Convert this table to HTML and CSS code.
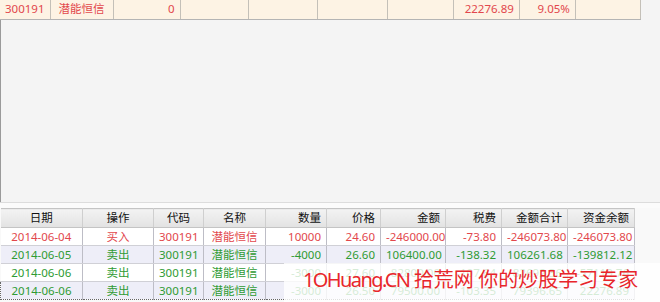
FILE: index.html
```html
<!DOCTYPE html>
<html lang="zh-CN">
<head>
<meta charset="utf-8">
<link rel="stylesheet" href="styles.css">
</head>
<body>
<div class="top-panel">
  <table class="pos">
    <colgroup>
      <col class="w50"><col class="w63"><col class="w67"><col class="w68"><col class="w69"><col class="w70"><col class="w66"><col class="w66"><col class="w56"><col class="w65">
    </colgroup>
    <tr>
      <td class="c">300191</td>
      <td class="c">潜能恒信</td>
      <td class="r">0</td>
      <td></td><td></td><td></td><td></td>
      <td class="r">22276.89</td>
      <td class="r">9.05%</td>
      <td></td>
    </tr>
  </table>
</div>
<div class="divider"></div>
<div class="bottom-panel">
  <table class="trades">
    <colgroup>
      <col class="d1"><col class="d2"><col class="d3"><col class="d4"><col class="d5"><col class="d6"><col class="d7"><col class="d8"><col class="d9"><col class="d10">
    </colgroup>
    <thead>
      <tr>
        <th class="c">日期</th><th class="c">操作</th><th class="c">代码</th><th class="c">名称</th>
        <th class="r">数量</th><th class="r">价格</th><th class="r">金额</th><th class="r">税费</th><th class="r">金额合计</th><th class="r">资金余额</th>
      </tr>
    </thead>
    <tbody>
      <tr class="buy">
        <td class="c">2014-06-04</td><td class="c">买入</td><td class="c">300191</td><td class="c">潜能恒信</td>
        <td class="r">10000</td><td class="r">24.60</td><td class="r">-246000.00</td><td class="r">-73.80</td><td class="r">-246073.80</td><td class="r">-246073.80</td>
      </tr>
      <tr class="sell alt">
        <td class="c">2014-06-05</td><td class="c">卖出</td><td class="c">300191</td><td class="c">潜能恒信</td>
        <td class="r">-4000</td><td class="r">26.60</td><td class="r">106400.00</td><td class="r">-138.32</td><td class="r">106261.68</td><td class="r">-139812.12</td>
      </tr>
      <tr class="sell">
        <td class="c">2014-06-06</td><td class="c">卖出</td><td class="c">300191</td><td class="c">潜能恒信</td>
        <td class="r">-3000</td><td class="r">27.60</td><td class="r">82800.00</td><td class="r">-107.64</td><td class="r">82692.36</td><td class="r">-57119.76</td>
      </tr>
      <tr class="sell alt focus">
        <td class="c">2014-06-06</td><td class="c">卖出</td><td class="c">300191</td><td class="c">潜能恒信</td>
        <td class="r">-3000</td><td class="r">26.50</td><td class="r">79500.00</td><td class="r">-103.35</td><td class="r">79396.65</td><td class="r">22276.89</td>
      </tr>
    </tbody>
  </table>
  <div class="watermark"><span class="wm-latin">1OHuang.CN</span> 拾荒网 你的炒股学习专家</div>
</div>
</body>
</html>
```
FILE: styles.css
```css
html, body {
  margin: 0;
  padding: 0;
  width: 660px;
  height: 302px;
  overflow: hidden;
  background: #f7f7f7;
  font-family: "Noto Sans", "Noto Sans CJK SC", sans-serif;
  font-size: 11.5px;
}

table {
  border-collapse: collapse;
  table-layout: fixed;
}

td, th {
  padding: 0 5px;
  white-space: nowrap;
  overflow: hidden;
  line-height: 16px;
}

.c { text-align: center; }
.r { text-align: right; }

/* top panel */
.top-panel {
  height: 202px;
  background: #f4f4f4;
  border-left: 1px solid #9a9a9a;
  box-sizing: border-box;
}

.pos {
  width: 641px;
  margin-left: -1px;
  background: #fdf3e4;
  color: #e2474c;
}
.pos td {
  height: 18px;
  border-right: 1px solid #c4c0b8;
  border-bottom: 1px solid #b4b4b4;
  padding-top: 0;
  padding-bottom: 1px;
}

.w50 { width: 50px; }
.w63 { width: 63px; }
.w67 { width: 67px; }
.w68 { width: 68px; }
.w69 { width: 69px; }
.w70 { width: 70px; }
.w66 { width: 66px; }
.w56 { width: 56px; }
.w65 { width: 65px; }

.divider {
  height: 5px;
  background: #fbfbfb;
  border-top: 1px solid #dcdcdc;
}

/* bottom panel */
.bottom-panel {
  position: relative;
  height: 94px;
  background: #f9f9f9;
}

.trades {
  width: 634px;
}

.d1 { width: 82px; }
.d2 { width: 71px; }
.d3 { width: 50px; }
.d4 { width: 62px; }
.d5 { width: 61px; }
.d6 { width: 54px; }
.d7 { width: 65px; }
.d8 { width: 56px; }
.d9 { width: 66px; }
.d10 { width: 67px; }

.trades th {
  font-weight: normal;
  color: #111111;
  height: 18px;
  background: linear-gradient(#f3f3f3, #e2e2e2);
  border-top: 1px solid #c4c4c4;
  border-right: 1px solid #cfcfcf;
  border-bottom: 1px solid #c4c4c4;
  padding-top: 0;
  padding-bottom: 0;
}

.trades td {
  height: 17px;
  background: #ffffff;
  border-right: 1px solid #bdbdc6;
  border-bottom: 1px solid #d0d0d6;
  padding-top: 0;
  padding-bottom: 0;
}

.trades tr.alt td {
  background: #eeeef8;
}

.buy td { color: #e2474c; }
.sell td { color: #2e9b33; }

.focus td {
  border-top: 1px dotted #666;
  border-bottom: 1px dotted #666;
}
.focus td:first-child { border-left: 1px dotted #666; }

.watermark {
  position: absolute;
  left: 284px;
  top: 55px;
  width: 376px;
  height: 39px;
  box-sizing: border-box;
  padding: 3px 0 0 19px;
  background: rgba(255, 255, 255, 0.8);
  color: #e8262b;
  font-family: "Noto Sans CJK SC", sans-serif;
  font-size: 20px;
  line-height: 26px;
  white-space: nowrap;
}

.wm-latin {
  font-family: "Noto Sans", sans-serif;
  letter-spacing: -1.6px;
}
```
